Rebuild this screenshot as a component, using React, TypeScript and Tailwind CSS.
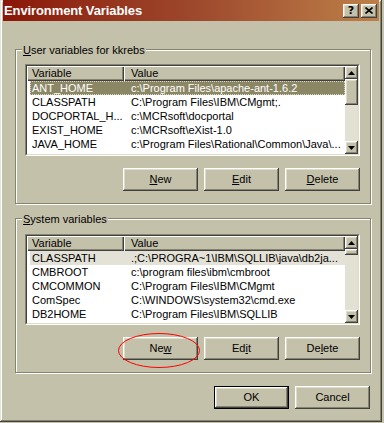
import React from 'react';

const userVars: [string, string][] = [
  ['ANT_HOME', 'c:\\Program Files\\apache-ant-1.6.2'],
  ['CLASSPATH', 'C:\\Program Files\\IBM\\CMgmt;.'],
  ['DOCPORTAL_H...', 'c:\\MCRsoft\\docportal'],
  ['EXIST_HOME', 'c:\\MCRsoft\\eXist-1.0'],
  ['JAVA_HOME', 'c:\\Program Files\\Rational\\Common\\Java\\...'],
];

const systemVars: [string, string][] = [
  ['CLASSPATH', '.;C:\\PROGRA~1\\IBM\\SQLLIB\\java\\db2ja...'],
  ['CMBROOT', 'c:\\program files\\ibm\\cmbroot'],
  ['CMCOMMON', 'C:\\Program Files\\IBM\\CMgmt'],
  ['ComSpec', 'C:\\WINDOWS\\system32\\cmd.exe'],
  ['DB2HOME', 'C:\\Program Files\\IBM\\SQLLIB'],
];

const raised =
  'shadow-[inset_-1px_-1px_#404040,inset_1px_1px_#ffffff,inset_-2px_-2px_#868470,inset_2px_2px_#dedbc9]';
const raisedThin = 'shadow-[inset_1px_1px_#ffffff,inset_-1px_-1px_#404040,inset_-2px_-2px_#868470]';

function Arrow({ down }: { down?: boolean }) {
  return (
    <svg width="7" height="4" viewBox="0 0 7 4" className={down ? 'rotate-180' : ''}>
      <polygon points="3.5,0 7,4 0,4" fill="#000" />
    </svg>
  );
}

function Scrollbar({ thumb }: { thumb: number }) {
  return (
    <div className="w-[13px] h-full flex flex-col bg-[#e3e0d4]">
      <div className={`h-[13px] shrink-0 bg-[#c4c1aa] flex items-center justify-center ${raised}`}>
        <Arrow />
      </div>
      <div className={`shrink-0 bg-[#c4c1aa] ${raised}`} style={{ height: thumb }} />
      <div className={`h-[13px] shrink-0 mt-auto bg-[#c4c1aa] flex items-center justify-center ${raised}`}>
        <Arrow down />
      </div>
    </div>
  );
}

function ListView({ rows, focused, thumb, height }: { rows: [string, string][]; focused: boolean; thumb: number; height: string }) {
  return (
    <div className={`${height} border border-t-[#868470] border-l-[#868470] border-r-white border-b-white`}>
      <div className="h-full flex border border-t-[#404040] border-l-[#404040] border-r-[#dedbc9] border-b-[#dedbc9] bg-white">
        <div className="flex-1 min-w-0 overflow-hidden">
          <div className="flex h-[15px] leading-[14px] bg-[#c4c1aa]">
            <div className={`w-[97px] pl-[5px] ${raisedThin}`}>Variable</div>
            <div className={`flex-1 pl-[7px] ${raisedThin}`}>Value</div>
          </div>
          {rows.map(([name, value], i) => {
            const sel = i === 0;
            const cls = sel
              ? focused
                ? 'bg-[#8b8765] text-white outline-1 outline-dotted outline-[#d9d6c4] -outline-offset-1'
                : 'bg-[#e4e1d6]'
              : '';
            return (
              <div key={name} className={`ml-[3px] flex h-[14px] leading-[14px] whitespace-nowrap ${cls}`}>
                <div className="w-[94px] pl-[2px] overflow-hidden">{name}</div>
                <div className="flex-1 pl-[7px] overflow-hidden">{value}</div>
              </div>
            );
          })}
        </div>
        <Scrollbar thumb={thumb} />
      </div>
    </div>
  );
}

function Button({ children, isDefault }: { children: React.ReactNode; isDefault?: boolean }) {
  return (
    <div
      className={`w-[75px] h-[23px] flex items-center justify-center bg-[#c4c1aa] ${
        isDefault ? 'border border-black' : ''
      } ${raised}`}
    >
      <span className="leading-[13px]">{children}</span>
    </div>
  );
}

function GroupBox({ label, children, top }: { label: React.ReactNode; children: React.ReactNode; top: string }) {
  return (
    <div className="relative h-[155px] border border-[#868470] shadow-[inset_1px_1px_#ffffff,1px_1px_#ffffff]">
      <span className="absolute -top-[6px] left-[6px] px-[1px] leading-[13px] bg-[#c4c1aa]">{label}</span>
      <div className={`${top} pl-[9px] pr-[10px] flex flex-col`}>{children}</div>
    </div>
  );
}

export default function App() {
  return (
    <div className="relative w-[384px] h-[423px] overflow-hidden bg-[#c4c1aa] text-[11px] text-black font-['Liberation_Sans',Arial,sans-serif]">
      <div className="w-[382px] h-[422px] flex flex-col px-[3px] shadow-[inset_-1px_-1px_#404040,inset_1px_1px_#e6e3d4,inset_-2px_-2px_#868470,inset_2px_2px_#ffffff]">
        {/* Title bar */}
        <div className="h-[21px] shrink-0 flex items-center pl-[1px] pr-[2px] bg-gradient-to-r from-[#8a1507] via-[#9d472c] to-[#bd8049]">
          <span className="text-white font-bold text-[13px] leading-[16px] tracking-[-0.1px]">Environment Variables</span>
          <div className="ml-auto flex gap-[2px]">
            <div className={`w-[16px] h-[14px] bg-[#c4c1aa] flex items-center justify-center ${raised}`}>
              <span className="font-bold text-[11px] leading-[11px] font-['DejaVu_Sans',sans-serif]">?</span>
            </div>
            <div className={`w-[16px] h-[14px] bg-[#c4c1aa] flex items-center justify-center ${raised}`}>
              <svg width="8" height="7" viewBox="0 0 8 7">
                <path d="M0.5 0.5 L7.5 6.5 M7.5 0.5 L0.5 6.5" stroke="#000" strokeWidth="1.6" />
              </svg>
            </div>
          </div>
        </div>

        <div className="ml-[12px] w-[356px] mt-[28px]">
          <GroupBox
            top="pt-[14px]"
            label={
              <>
                <u>U</u>ser variables for kkrebs
              </>
            }
          >
            <ListView rows={userVars} focused thumb={26} height="h-[92px]" />
            <div className="mt-[12px] flex justify-end gap-[6px]">
              <Button>
                <u>N</u>ew
              </Button>
              <Button>
                <u>E</u>dit
              </Button>
              <Button>
                <u>D</u>elete
              </Button>
            </div>
          </GroupBox>

          <div className="mt-[14px]">
            <GroupBox
              top="pt-[15px]"
              label={
                <>
                  <u>S</u>ystem variables
                </>
              }
            >
              <ListView rows={systemVars} focused={false} thumb={6} height="h-[91px]" />
              <div className="mt-[12px] flex justify-end gap-[6px]">
                <Button>
                  Ne<u>w</u>
                </Button>
                <Button>
                  Ed<u>i</u>t
                </Button>
                <Button>
                  De<u>l</u>ete
                </Button>
              </div>
            </GroupBox>
          </div>

          <div className="mt-[13px] pr-[1px] flex justify-end gap-[6px]">
            <Button isDefault>OK</Button>
            <Button>Cancel</Button>
          </div>
        </div>
      </div>

      {/* Annotation */}
      <svg className="absolute left-[118px] top-[333px]" width="82" height="35" viewBox="0 0 82 35">
        <ellipse cx="41" cy="17.5" rx="40.5" ry="17" fill="none" stroke="#ff0000" strokeWidth="1" />
      </svg>
    </div>
  );
}
